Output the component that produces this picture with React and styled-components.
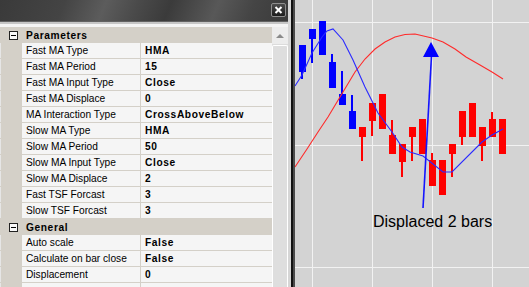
import React from "react";
import styled, { createGlobalStyle } from "styled-components";

const GlobalStyle = createGlobalStyle`
	html, body {
		margin: 0;
		padding: 0;
		overflow: hidden;
		background: #d3d3d3;
	}
	* {
		box-sizing: border-box;
	}
`
const Page = styled.div`
	width: 529px;
	height: 287px;
	display: flex;
	overflow: hidden;
	font-family: "Liberation Sans", Arial, sans-serif;
	font-size: 10.2px;
	color: #000;
`
const Panel = styled.div`
	width: 291px;
	display: flex;
	flex-direction: column;
	border-right: 3px solid #d6d6d6;
	background: #f4f4f4;
`
const TitleBar = styled.div`
	height: 22px;
	display: flex;
	justify-content: flex-end;
	align-items: flex-start;
	padding: 3px 2px 0 0;
	background: linear-gradient(112deg, #3a3a3a 0%, #444 22%, #5c5c5c 36%, #4a4a4a 47%, #3b3b3b 58%, #585858 74%, #454545 86%, #3a3a3a 100%);
	box-shadow: inset 0 -1px #626262;
`
const CloseButton = styled.div`
	width: 15px;
	height: 14px;
	display: flex;
	justify-content: center;
	align-items: center;
	border: 1px solid #8e8e8e;
	border-radius: 2px;
	background: linear-gradient(#4c4c4c, #1c1c1c);
`
const Body = styled.div`
	flex: 1;
	display: flex;
	border-top: 2px solid #c6c6c6;
	padding-top: 3px;
	min-height: 0;
`
const Grid = styled.div`
	width: 272px;
	display: flex;
	flex-direction: column;
`
const Row = styled.div`
	height: 16px;
	flex-shrink: 0;
	display: grid;
	grid-template-columns: 22px 119px 1fr;
	background: ${p => (p.$header ? "#d4d0c8" : "#f5f5f5")};
	border-bottom: 1px solid #d4d0c8;
	line-height: 15px;
	white-space: nowrap;
`
const Gutter = styled.div`
	background: #d4d0c8;
	border-left: 1px solid #e6e6e6;
`
const NameCell = styled.div`
	padding-left: 4px;
	border-right: 1px solid #d4d0c8;
	overflow: hidden;
`
const ValueCell = styled.div`
	padding-left: 4px;
	font-weight: 700;
	letter-spacing: 0.6px;
	overflow: hidden;
`
const HeaderRow = styled.div`
	height: 16px;
	flex-shrink: 0;
	display: flex;
	align-items: center;
	background: #d4d0c8;
	line-height: 15px;
	font-weight: 700;
	letter-spacing: 0.6px;
	padding-left: 9px;
	gap: 8px;
`
const ToggleBox = styled.span`
	width: 9px;
	height: 9px;
	border: 1px solid #222;
	background: #f8f8f8;
	position: relative;

	&::after {
		content: "";
		position: absolute;
		left: 1px;
		top: 3px;
		width: 5px;
		height: 1px;
		background: #000;
	}
`
const Scrollbar = styled.div`
	width: 16px;
	display: flex;
	flex-direction: column;
	background: #dcdcdc;
`
const ScrollButton = styled.div`
	height: 17px;
	display: flex;
	justify-content: center;
	align-items: center;
	background: #ececec;

	&::before {
		content: "";
		border-left: 4px solid transparent;
		border-right: 4px solid transparent;
		border-bottom: 4px solid #8a8a8a;
	}
`
const Thumb = styled.div`
	flex: 1;
	margin-top: 1px;
	border: 1px solid #fff;
	border-bottom: none;
	border-radius: 2px 2px 0 0;
	background: #dedede;
`
const Divider = styled.div`
	width: 4px;
	border-left: 2px solid #121212;
	background: #4a4a4a;
`
const Chart = styled.div`
	flex: 1;
	background: #d3d3d3;
	overflow: hidden;
`

const params = [
	["Fast MA Type", "HMA"],
	["Fast MA Period", "15"],
	["Fast MA Input Type", "Close"],
	["Fast MA Displace", "0"],
	["MA Interaction Type", "CrossAboveBelow"],
	["Slow MA Type", "HMA"],
	["Slow MA Period", "50"],
	["Slow MA Input Type", "Close"],
	["Slow MA Displace", "2"],
	["Fast TSF Forcast", "3"],
	["Slow TSF Forcast", "3"],
]
const general = [
	["Auto scale", "False"],
	["Calculate on bar close", "False"],
	["Displacement", "0"],
	["", ""],
]

// x, bodyTop, bodyBottom, wickTop, wickBottom, up
const candles = [
	[299, 45, 72, 45, 79, 1],
	[309, 29, 39, 29, 63, 1],
	[319, 21, 55, 21, 55, 1],
	[329, 62, 88, 54, 88, 1],
	[339, 94, 105, 71, 105, 1],
	[349, 111, 129, 95, 129, 1],
	[359, 127, 137, 127, 161, 0],
	[369, 103, 121, 103, 136, 0],
	[379, 94, 129, 94, 129, 0],
	[389, 135, 154, 120, 154, 0],
	[399, 144, 162, 144, 177, 0],
	[409, 127, 137, 127, 161, 0],
	[419, 119, 154, 119, 154, 0],
	[429, 160, 186, 153, 186, 0],
	[439, 160, 195, 160, 195, 0],
	[449, 144, 154, 144, 177, 0],
	[459, 111, 137, 111, 145, 0],
	[469, 103, 137, 103, 137, 0],
	[479, 127, 146, 127, 161, 0],
	[489, 119, 137, 112, 137, 0],
	[499, 119, 154, 119, 154, 0],
]
const blueLine = "295,86 302,75 312,53 322,37 327,31 333,29 343,40 353,60 365,87 378,113 392,132 402,147 410,152 423,156 443,172 452,172 482,142 492,135 503,129"
const redLine = "295,167 307,149 318,132 328,117 340,97 355,72 365,59 375,49 385,42 395,37 405,34.5 415,34 432,38 443,42 455,49 466,57 480,65 492,72 503,79"

const PriceChart = () => (
	<svg width="234" height="287" viewBox="295 0 234 287">
		{[22, 145, 267].map(y => (
			<rect key={y} x="295" y={y} width="234" height="1" fill="#f2f2f2" />
		))}
		{[312, 372, 432, 492].map(x => (
			<rect key={x} x={x} y="0" width="1" height="287" fill="#f2f2f2" />
		))}
		{candles.map(([x, bt, bb, wt, wb, up]) => {
			const c = up ? "#0000ff" : "#ff0000"
			return (
				<g key={x} fill={c}>
					<rect x={x + 2} y={wt} width="2" height={wb - wt} />
					<rect x={x} y={bt} width="7" height={bb - bt} />
				</g>
			)
		})}
		<polyline points={redLine} fill="none" stroke="#ff2a2a" strokeWidth="1.1" />
		<polyline points={blueLine} fill="none" stroke="#2a2aff" strokeWidth="1.1" />
		<line x1="423" y1="208" x2="431.5" y2="56" stroke="#1414ff" strokeWidth="1.6" />
		<polygon points="431,42 423,57 439,57" fill="#0000ff" />
		<text x="373" y="227" fontFamily="Liberation Sans, Arial, sans-serif" fontSize="16" fill="#000">
			Displaced 2 bars
		</text>
	</svg>
)

const App = () => {
	return (
		<Page>
			<GlobalStyle />
			<Panel>
				<TitleBar>
					<CloseButton>
						<svg width="9" height="8" viewBox="0 0 9 8">
							<path d="M1.5 1 L7.5 7 M7.5 1 L1.5 7" stroke="#fff" strokeWidth="2" />
						</svg>
					</CloseButton>
				</TitleBar>
				<Body>
					<Grid>
						<HeaderRow>
							<ToggleBox />
							Parameters
						</HeaderRow>
						{params.map(([name, value]) => (
							<Row key={name}>
								<Gutter />
								<NameCell>{name}</NameCell>
								<ValueCell>{value}</ValueCell>
							</Row>
						))}
						<HeaderRow>
							<ToggleBox />
							General
						</HeaderRow>
						{general.map(([name, value], i) => (
							<Row key={i}>
								<Gutter />
								<NameCell>{name}</NameCell>
								<ValueCell>{value}</ValueCell>
							</Row>
						))}
					</Grid>
					<Scrollbar>
						<ScrollButton />
						<Thumb />
					</Scrollbar>
				</Body>
			</Panel>
			<Divider />
			<Chart>
				<PriceChart />
			</Chart>
		</Page>
	)
}
export default App;
